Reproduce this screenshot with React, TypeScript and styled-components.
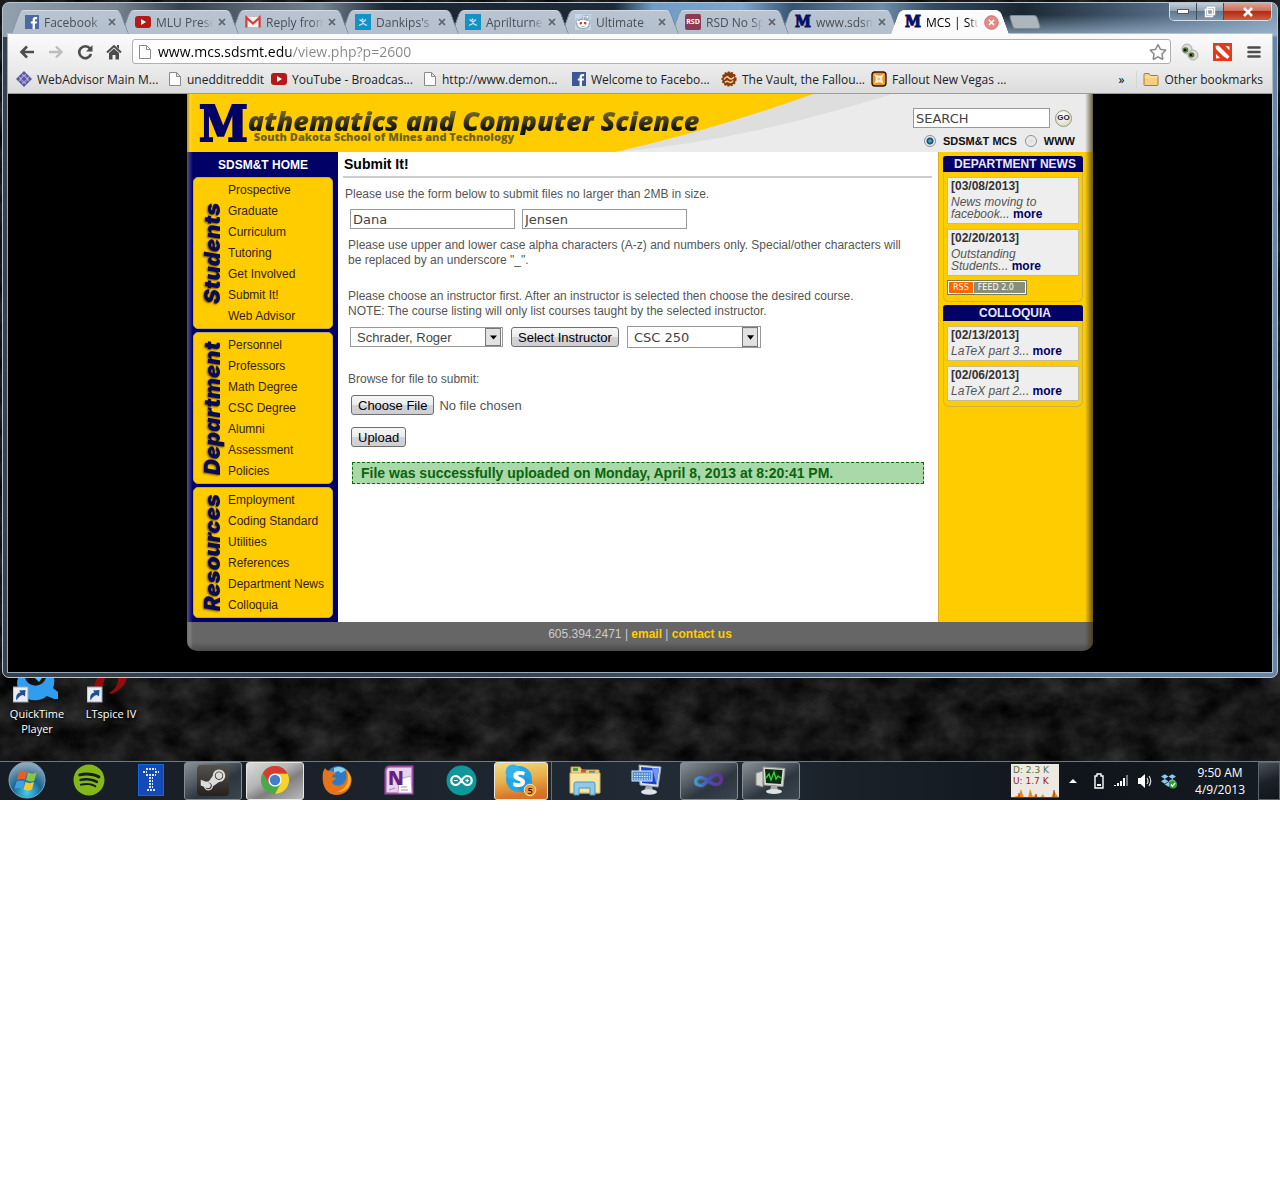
import React from "react";
import styled, { createGlobalStyle, css } from "styled-components";
import { FaDropbox, FaSpotify, FaSteamSymbol, FaRedditAlien, FaRegStar } from "react-icons/fa";

const UI_FONT = '"Open Sans", "Noto Sans", sans-serif';
const PAGE_FONT = '"Liberation Sans", Arial, sans-serif';
const FIELD_FONT = '"DejaVu Sans", Verdana, sans-serif';
const NAVY = "#000066";
const GOLD = "#ffcc00";

const GlobalStyle = createGlobalStyle`
  *, *::before, *::after { box-sizing: border-box; }
  body { margin: 0; background: #fff; font-family: ${UI_FONT}; }
  button, input, select { margin: 0; font-family: inherit; }
  ul { list-style: none; margin: 0; padding: 0; }
  h1, h2, h3, p { margin: 0; }
  svg { display: block; flex: none; }
`;

/* ---------- desktop ---------- */

const Desktop = styled.div`
  position: relative;
  display: flex;
  flex-direction: column;
  padding-top: 2px;
  overflow: hidden;
  background: #0c0c0c;
`;

const Wallpaper = styled.svg`
  position: absolute;
  inset: 0;
  width: 100%;
  height: 100%;
`;

const DesktopArea = styled.div`
  position: relative;
  display: flex;
  min-height: 83px;
`;

const Shortcut = styled.a`
  display: flex;
  flex-direction: column;
  align-items: center;
  width: 74px;
  color: #fff;
  font-size: 11px;
  line-height: 15px;
  text-align: center;
  text-decoration: none;
  text-shadow: 1px 1px 2px #000;
  svg { margin-bottom: 2px; }
`;

/* ---------- browser window ---------- */

const Window = styled.div`
  position: relative;
  margin: 0 2px;
  padding: 0 5px 5px;
  border: 1px solid #b9c6d3;
  border-radius: 7px;
  background:
    linear-gradient(180deg, rgba(160, 185, 210, 0) 12px, rgba(160, 185, 210, 0.75) 32px, rgba(160, 185, 210, 0.1) 33px) right top / 22% 34px no-repeat,
    linear-gradient(90deg, #93a0ad 0, #75818e 9%, #34404e 14%, #5a6773 20%, #74818e 25%, #1b2633 30%, #1d2936 48%, #6f9cc6 51%, #7ba6cd 58%, #35526e 62%, #6d8ba8 69%, #344a60 73%, #1a2733 80%, #43596e 88%, #7f9ab5 100%) 0 0 / 100% 34px no-repeat,
    linear-gradient(90deg, #36414c 0, #36414c 40%, #5a748f 78%, #6886a6 100%);
`;

const TitleBar = styled.div`
  display: flex;
  align-items: flex-end;
  min-height: 31px;
  padding-left: 3px;
`;

const TabList = styled.div`
  display: flex;
  flex: 0 1 auto;
  min-width: 0;
`;

const Tab = styled.button<{ $active?: boolean; $order: number }>`
  position: relative;
  z-index: ${(p) => (p.$active ? 20 : 10 - p.$order)};
  display: flex;
  flex: 0 1 118px;
  align-items: center;
  gap: 5px;
  min-width: 0;
  width: 118px;
  height: 24px;
  margin-right: -8px;
  padding: 0 ${(p) => (p.$active ? 10 : 13)}px 0 14px;
  border: 0;
  background: none;
  color: ${(p) => (p.$active ? "#000" : "#4a4f57")};
  font-size: 12px;
  text-align: left;

  &::before,
  &::after {
    content: "";
    position: absolute;
    z-index: -1;
    top: 0;
    bottom: 0;
    width: 50%;
    border-top: 1px solid ${(p) => (p.$active ? "#fff" : "#d3dbe4")};
    background: ${(p) => (p.$active ? "#fbfbfb" : "linear-gradient(#bac4d1, #b3bfcd)")};
  }
  &::before {
    left: 0;
    border-left: 1px solid ${(p) => (p.$active ? "#fff" : "#8492a3")};
    border-top-left-radius: 5px;
    transform: skewX(-20deg);
    transform-origin: bottom left;
  }
  &::after {
    right: 0;
    border-right: 1px solid ${(p) => (p.$active ? "#fff" : "#75849a")};
    border-top-right-radius: 5px;
    transform: skewX(20deg);
    transform-origin: bottom right;
  }
`;

const TabLabel = styled.span`
  flex: 1;
  min-width: 0;
  overflow: hidden;
  white-space: nowrap;
  mask-image: linear-gradient(90deg, #000 80%, transparent);
`;

const NewTab = styled.button`
  width: 28px;
  height: 14px;
  margin: 0 0 5px 10px;
  border: 1px solid #7e8a96;
  border-radius: 3px;
  background: #aeb6bd;
  transform: skewX(18deg);
`;

const WindowControls = styled.div`
  display: flex;
  align-self: flex-start;
  margin-left: auto;
  border: 1px solid #d5dfe9;
  border-top: 0;
  border-radius: 0 0 5px 5px;
  overflow: hidden;
`;

const ControlButton = styled.button<{ $close?: boolean }>`
  display: grid;
  place-items: center;
  width: ${(p) => (p.$close ? 47 : 27)}px;
  height: 17px;
  padding: 0;
  border: 0;
  border-right: ${(p) => (p.$close ? "0" : "1px solid #3d4f60")};
  background: ${(p) =>
    p.$close
      ? "linear-gradient(#e0a392 0, #cf6e58 45%, #b52b16 50%, #cd5f3f 100%)"
      : "linear-gradient(#c3ced9 0, #93a5b6 45%, #61788e 50%, #7f97ad 100%)"};
`;

const Client = styled.div`
  box-shadow: 0 0 0 1px rgba(190, 206, 222, 0.75);
`;

const Toolbar = styled.div`
  display: flex;
  align-items: center;
  padding: 5px 2px 4px 4px;
  background: linear-gradient(#fbfbfb, #ebebeb);
`;

const ToolButton = styled.button<{ $wide?: boolean }>`
  display: grid;
  place-items: center;
  width: ${(p) => (p.$wide ? 32 : 29)}px;
  height: 24px;
  padding: 0;
  border: 0;
  background: none;
`;

const Omnibox = styled.label`
  display: flex;
  flex: 1;
  align-items: center;
  gap: 6px;
  height: 25px;
  margin: 0 3px 0 4px;
  padding: 0 3px 0 5px;
  border: 1px solid #b0b0b0;
  border-radius: 3px;
  background: #fff;
`;

const UrlInput = styled.input`
  flex: 1;
  min-width: 0;
  padding: 0;
  border: 0;
  outline: 0;
  background: linear-gradient(90deg, #000 133px, #868686 133px);
  background-clip: text;
  -webkit-background-clip: text;
  color: transparent;
  font-size: 14px;
  line-height: 20px;
`;

const BookmarkBar = styled.nav`
  display: flex;
  align-items: center;
  min-height: 26px;
  padding: 0 9px 3px 8px;
  border-bottom: 1px solid #9c9c9c;
  background: linear-gradient(#ebebeb, #dcdcdc);
  font-size: 12px;
`;

const Bookmark = styled.a<{ $width?: number }>`
  display: flex;
  flex: 0 ${(p) => (p.$width ? 1 : 0)} ${(p) => (p.$width ? `${p.$width}px` : "auto")};
  align-items: center;
  gap: 5px;
  min-width: 0;
  color: #222;
  text-decoration: none;
  white-space: nowrap;
`;

const Overflow = styled.button`
  margin: 0 6px 0 auto;
  padding: 0 12px 0 0;
  border: 0;
  border-right: 1px solid #cfd6dd;
  background: none;
  font-size: 12px;
`;

const Viewport = styled.div`
  padding-bottom: 21px;
  background: #000;
`;

/* ---------- department site ---------- */

const Site = styled.div`
  position: relative;
  max-width: 906px;
  margin: 0 auto;
  overflow: hidden;
  border-radius: 0 0 10px 10px;
  color: #555;
  font-family: ${PAGE_FONT};
  font-size: 12px;
  line-height: 15px;

  &::before,
  &::after {
    content: "";
    position: absolute;
    z-index: 2;
    top: 0;
    bottom: 0;
    pointer-events: none;
  }
  &::before {
    left: 0;
    width: 6px;
    background: linear-gradient(90deg, rgba(120, 120, 120, 0.7), rgba(255, 255, 255, 0.15) 50%, transparent);
  }
  &::after {
    right: 0;
    width: 8px;
    background: linear-gradient(90deg, transparent, rgba(60, 50, 0, 0.75));
  }
`;

const SiteHeader = styled.header`
  position: relative;
  display: flex;
  align-items: flex-start;
  justify-content: space-between;
  height: 58px;
  padding: 0 18px 0 12px;
  background: #ebebeb;
`;

const Swoosh = styled.svg`
  position: absolute;
  left: 0;
  top: 0;
`;

const Brand = styled.div`
  position: relative;
  display: flex;
`;

const BlockM = styled.span`
  color: ${NAVY};
  font-family: "DejaVu Serif Condensed", "DejaVu Serif", serif;
  font-size: 49px;
  font-weight: 700;
  line-height: 60px;
  -webkit-text-stroke: 2px ${NAVY};
`;

const BrandText = styled.div`
  padding-top: 13px;
  font-family: ${UI_FONT};
  font-weight: 800;
  white-space: nowrap;
`;

const BrandTitle = styled.h1`
  background: linear-gradient(180deg, #6b6128 25%, #16170f 75%);
  background-clip: text;
  -webkit-background-clip: text;
  color: transparent;
  font-size: 27px;
  font-style: italic;
  font-weight: 800;
  line-height: 28px;
`;

const BrandSub = styled.p`
  margin-top: -4px;
  padding-left: 6px;
  color: #6f6420;
  font-size: 11px;
  line-height: 12px;
`;

const SearchForm = styled.form`
  position: relative;
  display: flex;
  flex-direction: column;
  align-items: flex-end;
  gap: 6px;
  padding-top: 14px;
`;

const SearchRow = styled.div`
  display: flex;
  align-items: center;
  gap: 5px;
  padding-right: 3px;
`;

const TextInput = styled.input<{ $width: number }>`
  width: ${(p) => p.$width}px;
  height: 20px;
  padding: 0 2px;
  border: 1px solid #999;
  background: #fff;
  color: #444;
  font-family: ${FIELD_FONT};
  font-size: 13px;
`;

const GoButton = styled.button`
  width: 17px;
  height: 17px;
  padding: 0;
  border: 1px solid #96967c;
  border-radius: 50%;
  background: radial-gradient(circle at 40% 30%, #fff, #d3d3b8);
  color: #223;
  font-size: 8px;
  font-weight: 700;
  line-height: 14px;
`;

const ScopeRow = styled.div`
  display: flex;
  align-items: center;
  color: #111;
  font-size: 11px;
  font-weight: 700;
  line-height: 14px;
`;

const ScopeLabel = styled.label`
  display: flex;
  align-items: center;
  gap: 7px;
  margin-left: 8px;
`;

const Radio = styled.input`
  appearance: none;
  width: 12px;
  height: 12px;
  border: 1px solid #8a8f94;
  border-radius: 50%;
  background: radial-gradient(circle, #ddd, #f6f6f6);
  &:checked {
    background: radial-gradient(circle, #5fc0e8 0, #12466b 3px, #e8eef2 4px);
  }
`;

const Columns = styled.div`
  display: grid;
  grid-template-columns: 151px 1fr 155px;
`;

const Sidebar = styled.nav`
  display: flex;
  flex-direction: column;
  gap: 3px;
  padding: 1px 5px 4px 6px;
  background: ${NAVY};
`;

const HomeLink = styled.a`
  margin-bottom: -3px;
  color: #fff;
  font-weight: 700;
  line-height: 24px;
  text-align: center;
  text-decoration: none;
`;

const MenuGroup = styled.section`
  display: flex;
  padding: 2px 1px 1px 8px;
  border: 1px solid #b9ab66;
  border-radius: 5px;
  background: ${GOLD};
`;

const MenuTitle = styled.h2`
  width: 20px;
  color: #0b0b55;
  font-family: Inter, ${UI_FONT};
  font-size: 22px;
  font-style: italic;
  font-weight: 900;
  line-height: 20px;
  text-align: center;
  text-shadow: -1px -1px 2px rgba(60, 40, 0, 0.7);
  writing-mode: vertical-rl;
  transform: rotate(180deg);
`;

const MenuList = styled.ul`
  padding-left: 6px;
  line-height: 21px;
  white-space: nowrap;
  a { color: #33220a; text-decoration: none; }
`;

const Main = styled.main`
  padding: 0 6px 0 5px;
  background: #fff;
`;

const PageTitle = styled.h2`
  padding: 1px 0 0 1px;
  border-bottom: 2px solid #ccc;
  color: #000;
  font-size: 14px;
  line-height: 23px;
`;

const Intro = styled.p`
  padding: 9px 2px 7px;
`;

const FormBody = styled.form`
  padding: 0 5px;
`;

const Note = styled.p<{ $top: number }>`
  margin-top: ${(p) => p.$top}px;
  padding-right: 12px;
`;

const FieldRow = styled.div<{ $top?: number; $gap?: number; $inset?: number }>`
  display: flex;
  align-items: center;
  gap: ${(p) => p.$gap ?? 8}px;
  margin-top: ${(p) => p.$top ?? 0}px;
  padding-left: ${(p) => p.$inset ?? 2}px;
`;

const SelectBox = styled.div<{ $width: number; $tall?: boolean }>`
  position: relative;
  width: ${(p) => p.$width}px;
  select {
    display: block;
    width: 100%;
    height: ${(p) => (p.$tall ? 22 : 20)}px;
    padding: 0 20px 0 6px;
    border: 1px solid #999;
    border-radius: 0;
    appearance: none;
    background: #fff;
    color: #444;
    font-family: ${(p) => (p.$tall ? FIELD_FONT : PAGE_FONT)};
    font-size: 13px;
  }
  svg {
    position: absolute;
    top: 1px;
    right: ${(p) => (p.$tall ? 1 : 0)}px;
    bottom: 1px;
    height: calc(100% - 2px);
    pointer-events: none;
  }
`;

const pushButton = css`
  height: 20px;
  padding: 0 6px;
  border: 1px solid #6f6f6f;
  border-radius: 3px;
  background: linear-gradient(#f6f6f6 0, #ececee 48%, #d3d2d7 52%, #cfcfd2 100%);
  color: #000;
  font-family: ${PAGE_FONT};
  font-size: 13px;
`;

const PushButton = styled.button`
  ${pushButton}
`;

const FileInput = styled.input`
  height: 20px;
  color: #555;
  font-family: ${PAGE_FONT};
  font-size: 13px;
  line-height: 20px;
  &::file-selector-button {
    ${pushButton}
    margin: 0 5px 0 0;
  }
`;

const Success = styled.p`
  margin: 15px 3px 0 4px;
  padding: 0 8px;
  border: 1px dashed #0b6b0b;
  background: #a9d8a9;
  color: #0b650b;
  font-size: 14px;
  font-weight: 700;
  line-height: 20px;
`;

const NewsColumn = styled.aside`
  padding: 4px 10px 0 4px;
  border-left: 1px solid #d8b020;
  background: ${GOLD};
`;

const NewsBox = styled.section`
  margin-bottom: 3px;
  border: 1px solid #cdb24a;
  border-top: 0;
  border-radius: 3px 3px 6px 6px;
`;

const NewsHeading = styled.h3`
  margin: 0 -1px 5px;
  padding-left: 4px;
  border-radius: 3px 3px 0 0;
  background: ${NAVY};
  color: #e9e9f4;
  font-size: 12px;
  line-height: 16px;
  text-align: center;
`;

const NewsCard = styled.article`
  margin: 0 3px 5px;
  padding: 0 3px 3px;
  border: 1px solid #c4bd94;
  background: #eee;
  color: #555;
  font-style: italic;
  line-height: 12px;
  white-space: pre-line;
  time {
    display: block;
    margin-bottom: 2px;
    color: #333;
    font-style: normal;
    font-weight: 700;
    line-height: 16px;
  }
  a {
    color: ${NAVY};
    font-style: normal;
    font-weight: 700;
    text-decoration: none;
  }
`;

const RssBadge = styled.a`
  display: flex;
  width: 80px;
  margin: -1px 3px 6px;
  padding: 1px;
  border: 1px solid #77775a;
  background: #fff;
  color: #fff;
  font-family: ${FIELD_FONT};
  font-size: 8px;
  line-height: 11px;
  text-decoration: none;
  span { padding: 0 4px; background: #ff6600; margin-right: 1px; }
  strong { flex: 1; padding: 0 4px; background: #898e79; font-weight: 400; white-space: nowrap; }
`;

const SiteFooter = styled.footer`
  padding: 5px 0 9px;
  background: linear-gradient(#666 70%, #4a4a4a);
  color: #ccc;
  text-align: center;
  a { color: ${GOLD}; font-weight: 700; text-decoration: none; }
`;

/* ---------- taskbar ---------- */

const Taskbar = styled.footer`
  position: relative;
  display: flex;
  align-items: center;
  gap: 4px;
  border-top: 1px solid #6f7880;
  background: linear-gradient(90deg, #161c24, #1b222b 30%, #222c36 55%, #1a2129 66%, #10151b 85%, #141b22);
`;

const StartButton = styled.button`
  width: 56px;
  height: 38px;
  padding: 0 0 0 7px;
  border: 0;
  background: none;
`;

type AppState = "idle" | "open" | "active" | "alert";

const surfaces: Record<AppState, string> = {
  idle: "none",
  open: "linear-gradient(150deg, #8a9096 0, #555d65 35%, #2d363f 60%, #3b454e)",
  active: "linear-gradient(150deg, #dcdcdc 0, #b4b4b4 40%, #7f7f7f 60%, #bababa)",
  alert: "linear-gradient(170deg, #f0dc84 0, #e8b04a 45%, #d8782a 80%, #d36c20)",
};

const AppButton = styled.button<{ $state: AppState }>`
  display: grid;
  place-items: center;
  width: 58px;
  height: 38px;
  padding: 0 0 2px;
  border: 1px solid ${(p) => (p.$state === "idle" ? "transparent" : p.$state === "open" ? "#858d94" : "#e8e8e0")};
  border-radius: 3px;
  background: ${(p) => surfaces[p.$state]};
`;

const AppSlot = styled.div`
  width: 58px;
  padding-right: 4px;
  border-right: 1px solid #66707a;
  button { width: 54px; }
`;

const Tray = styled.div`
  display: flex;
  align-items: center;
  align-self: stretch;
  gap: 8px;
  margin-left: auto;
  color: #fff;
`;

const NetMeter = styled.div`
  position: relative;
  width: 48px;
  height: 34px;
  padding: 1px 2px;
  background: #ece9e2;
  color: #5c7040;
  font-family: ${FIELD_FONT};
  font-size: 9px;
  line-height: 11px;
  white-space: nowrap;
  p + p { color: #9c1c1c; }
  svg { position: absolute; left: 0; bottom: 0; }
`;

const Clock = styled.time`
  padding: 0 5px 0 10px;
  font-size: 12px;
  line-height: 17px;
  text-align: center;
`;

const ShowDesktop = styled.button`
  width: 22px;
  align-self: stretch;
  border: 1px solid #5c646c;
  background: linear-gradient(160deg, #4a525a, #1b2128 50%, #10151a);
`;

/* ---------- small drawings ---------- */

const FacebookMark = ({ muted = false }) => (
  <svg width="14" height="14" viewBox="0 0 14 14">
    <rect width="14" height="14" fill={muted ? "#4c69a4" : "#3b5998"} />
    <path d="M7.6 14V8.6H5.8V6.5h1.8V5c0-1.9 1-2.9 2.9-2.9h1.6v2.1h-1.2c-.8 0-1 .3-1 1v1.3h2.2l-.3 2.1H9.9V14z" fill="#fff" />
  </svg>
);

const YouTubeMark = () => (
  <svg width="16" height="14" viewBox="0 0 16 14">
    <rect y="1" width="16" height="12" rx="3" fill="#b31b1b" />
    <path d="M6 4l5 3-5 3z" fill="#fff" />
  </svg>
);

const GmailMark = () => (
  <svg width="16" height="14" viewBox="0 0 16 14">
    <rect x="1" y="1.5" width="14" height="11" fill="#f3f3f3" stroke="#c9a5a5" strokeWidth=".6" />
    <path d="M1.4 12.5V2.5L8 8.6l6.6-6.1v10" fill="none" stroke="#d23f3a" strokeWidth="2.2" />
  </svg>
);

const SwimMark = () => (
  <svg width="16" height="16" viewBox="0 0 16 16">
    <rect width="16" height="16" fill="#1592c4" />
    <path d="M4.500 5.500L8 8l3-2.500M8 8v1.500L4 11.500M8 9.500l4 2" fill="none" stroke="#d6effa" strokeWidth="1.1" />
    <circle cx="7.500" cy="5.500" r="1" fill="#d6effa" />
  </svg>
);

const RedditMark = styled.span`
  position: relative;
  flex: none;
  display: grid;
  place-items: center;
  width: 16px;
  height: 16px;
  background: #c4d9ea;
  color: #fff;
  svg { filter: drop-shadow(0 0 1px #333); }
  &::after {
    content: "";
    position: absolute;
    left: 5px;
    top: 8px;
    width: 2px;
    height: 2px;
    background: #d8402a;
    box-shadow: 4px 0 0 #d8402a;
  }
`;

const RsdMark = styled.span`
  flex: none;
  width: 16px;
  height: 16px;
  border-radius: 2px;
  background: #8c3b55;
  color: #fff;
  font-size: 7px;
  font-weight: 700;
  line-height: 16px;
  text-align: center;
`;

const MiniM = styled.span`
  flex: none;
  width: 16px;
  color: #0a1066;
  font-family: "DejaVu Serif Condensed", "DejaVu Serif", serif;
  font-size: 16px;
  font-weight: 700;
  line-height: 16px;
  -webkit-text-stroke: 1px #0a1066;
`;

const PageMark = () => (
  <svg width="14" height="16" viewBox="0 0 14 16">
    <path d="M1.5 1.5h7l4 4v9h-11z M8.5 1.5v4h4" fill="#fcfcfc" stroke="#8b8b8b" />
  </svg>
);

const CloseMark = () => (
  <svg width="8" height="8" viewBox="0 0 8 8">
    <path d="M1 1l6 6M7 1L1 7" stroke="#5c6168" strokeWidth="1.7" />
  </svg>
);

const ActiveCloseMark = () => (
  <svg width="15" height="15" viewBox="0 0 15 15">
    <circle cx="7.5" cy="7.5" r="6.8" fill="#e48d88" stroke="#cf6f6b" />
    <path d="M5 5l5 5M10 5l-5 5" stroke="#fff" strokeWidth="1.6" />
  </svg>
);

const AdvisorMark = () => (
  <svg width="16" height="16" viewBox="0 0 16 16">
    <path d="M8 0l3 3 1 1 4 4-4 4-1 1-3 3-3-3-1-1-4-4 4-4 1-1z" fill="#5a58a6" />
    <path d="M8 3.5L12.5 8 8 12.5 3.5 8zM5.5 2.5l8 8M2.5 5.5l8 8M10.5 2.5l-8 8M13.5 5.5l-8 8" fill="none" stroke="#b9b8de" strokeWidth=".8" />
  </svg>
);

const VaultMark = () => (
  <svg width="16" height="16" viewBox="0 0 16 16">
    <circle cx="8" cy="8" r="6.8" fill="#8a3c0c" stroke="#8a3c0c" strokeWidth="1.600" strokeDasharray="2 1.4" />
    <path d="M3 8.500c2-3.500 3.500-3 5-1.500s3 1.500 5-1M4 11.500c1.500-2 2.500-1.500 4-.5s3 .5 4-1.500" fill="none" stroke="#f6d3a4" strokeWidth="1.500" />
  </svg>
);

const VegasMark = () => (
  <svg width="16" height="16" viewBox="0 0 16 16">
    <rect x="1" y="1" width="14" height="14" rx="3" fill="#e8952e" stroke="#2b1a08" strokeWidth="1.4" />
    <path d="M3 3q5 3.500 10 0-3.500 5 0 10-5-3.500-10 0 3.500-5 0-10z" fill="#fff3d6" />
    <circle cx="8" cy="8" r="1.600" fill="#f3bd6e" />
  </svg>
);

const FolderMark = () => (
  <svg width="16" height="14" viewBox="0 0 16 14">
    <path d="M1 12.500V2.500q0-1 1-1h4l1.500 2H14q1 0 1 1v8q0 1-1 1H2q-1 0-1-1z" fill="#f3cf82" stroke="#a87c35" />
    <path d="M1.500 5h13" stroke="#fbe7b8" />
  </svg>
);

const ShortcutArrow = ({ y }: { y: number }) => (
  <g transform={`translate(0 ${y})`}>
    <rect width="15" height="15" fill="#e9eef4" stroke="#9aa4b0" />
    <path d="M3.500 13.500C2.500 9 4 6 7.500 5.500L6 3.500l6.500-.5-.5 6.500-2-1.500c-3 .5-4.500 2-6.500 5.500z" fill="#1f4f98" />
  </g>
);

const ChromeMark = () => (
  <svg width="30" height="30" viewBox="0 0 30 30">
    <circle cx="15" cy="15" r="14" fill="#4aa84a" />
    <path d="M15 8.500h12.500A14 14 0 0 1 15 29l6-11z" fill="#f7d32b" />
    <path d="M15 8.500H27.400A14 14 0 0 0 3 7.800L9 18z" fill="#d93a30" />
    <circle cx="15" cy="15" r="6.600" fill="#fff" />
    <circle cx="15" cy="15" r="5.200" fill="#3f7fd0" />
  </svg>
);

const FirefoxMark = () => (
  <svg width="32" height="32" viewBox="0 0 32 32">
    <circle cx="17" cy="14" r="12" fill="#2d79c4" />
    <path d="M13 4c4-2 9-1 12 2l-5 3-3-2-4 2z" fill="#8fd0f0" />
    <path d="M2 8l2-4c1 2 3 3 5 3 3 0 5 1 6 3-2 0-4 1-4 3l4 1c0 2-3 2-4 4 1 4 8 5 12 1 3-4 3-9 1-14 5 3 8 9 6 15-2 7-8 11-14 11C7 31 0 24 2 8z" fill="#e5731c" />
    <path d="M25 6c5 4 6 11 3 16-3 4-8 7-13 6 7-1 12-7 12-13 0-3 0-6-2-9z" fill="#f8b32c" />
  </svg>
);

const OneNoteMark = () => (
  <svg width="30" height="30" viewBox="0 0 30 30">
    <path d="M1.500 6q0-4.500 4.500-4.500h22.500v27h-27z" fill="#e9d3ec" stroke="#9b4da3" strokeWidth="2" />
    <path d="M15 14l12-3 1 17H14z" fill="#fff" stroke="#c39ac8" />
    <text x="4" y="20" fontFamily="Open Sans" fontWeight="800" fontSize="19" fill="#6b1f7c">N</text>
    <path d="M5 25l6-2M17 22h6M17 25h7" stroke="#b284b8" />
  </svg>
);

const ArduinoMark = () => (
  <svg width="31" height="31" viewBox="0 0 31 31">
    <circle cx="15.500" cy="15.500" r="15" fill="#0f989c" />
    <path d="M15.500 15.500c-2-3-3.500-4.500-5.700-4.500a4.500 4.500 0 0 0 0 9c2.200 0 3.700-1.500 5.700-4.500s3.500-4.500 5.700-4.500a4.500 4.500 0 0 1 0 9c-2.200 0-3.700-1.500-5.700-4.500z" fill="none" stroke="#fff" strokeWidth="2.200" />
    <path d="M8 15.500h3.600M19.400 15.500H23M21.200 13.700v3.600" stroke="#fff" strokeWidth="1.200" />
  </svg>
);

const SkypeMark = () => (
  <svg width="34" height="34" viewBox="0 0 34 34">
    <circle cx="15" cy="16" r="13" fill="#22a7e6" />
    <circle cx="9" cy="9" r="7.500" fill="#35b2ec" />
    <circle cx="21" cy="22" r="7.500" fill="#1d9be0" />
    <text x="15" y="24" textAnchor="middle" fontFamily="Open Sans" fontWeight="800" fontSize="23" fill="#fff">S</text>
    <circle cx="26" cy="27" r="5.800" fill="#f3982b" stroke="#fde2b0" />
    <text x="26" y="30.500" textAnchor="middle" fontFamily="Open Sans" fontWeight="600" fontSize="9" fill="#222">5</text>
  </svg>
);

const ExplorerMark = () => (
  <svg width="34" height="32" viewBox="0 0 34 32">
    <path d="M3 29V3h9l2 3h17v23z" fill="#ecd184" stroke="#c49f45" />
    <path d="M5 4h5v3H5z" fill="#43a047" />
    <path d="M13 6h5v3h-5z" fill="#d35435" />
    <path d="M21 7h6v3h-6z" fill="#3b8fd2" />
    <path d="M2 9h30v20H2z" fill="#f7e5a5" stroke="#d3b159" />
    <path d="M6 31V20q0-2 2-2h17q2 0 2 2v11h-5v-7H11v7z" fill="#8fcbe8" stroke="#4d95bd" />
  </svg>
);

const RemoteMark = () => (
  <svg width="34" height="32" viewBox="0 0 34 32">
    <path d="M9 1l22 2-3 20-18-2z" fill="#dfe3e8" stroke="#9aa" />
    <path d="M11 3l18 1.500-2.500 16L12 19z" fill="#1b3fd0" />
    <path d="M22 4l7 .5-2.500 16z" fill="#6f95f0" />
    <rect x="2" y="7" width="20" height="10" fill="#4f8fd8" stroke="#dbe9f8" />
    <path d="M4 10h16M4 12.500h16M4 15h16" stroke="#e7f2ff" strokeDasharray="1.500 1" />
    <path d="M16 22l6 .5 1 4H14z" fill="#aab" />
    <ellipse cx="19" cy="28" rx="8" ry="2.800" fill="#dfe3e8" />
  </svg>
);

const VisualStudioMark = () => (
  <svg width="32" height="20" viewBox="0 0 32 20">
    <defs>
      <linearGradient id="vs" x1="0" x2="1">
        <stop offset="0" stopColor="#3d9bd0" />
        <stop offset=".5" stopColor="#4750b4" />
        <stop offset="1" stopColor="#6b2f9c" />
      </linearGradient>
    </defs>
    <path d="M8 15.500c-7 0-7-8 0-8 5 0 10 7 15 7 7 0 7-10 0-10-5 0-10 11-15 11z" fill="none" stroke="url(#vs)" strokeWidth="3.600" />
  </svg>
);

const MonitorMark = () => (
  <svg width="32" height="30" viewBox="0 0 32 30">
    <path d="M1 8l7-2v16l-7-2z" fill="#d4d7cf" stroke="#888" />
    <path d="M8 2l22 1.500-2 18L9 20z" fill="#d9dcd6" stroke="#999" />
    <path d="M10 4l17.500 1-1.500 14-15-1z" fill="#0b2b0f" />
    <path d="M11 13l3-4 2 6 3-8 2 7 2-3 3 2" fill="none" stroke="#2fd23a" strokeWidth="1.400" />
    <path d="M16 21h6l1 4h-8z" fill="#aaa" />
    <ellipse cx="19" cy="26.500" rx="8" ry="2.600" fill="#dfe3e0" />
  </svg>
);

const TerminalMark = () => (
  <svg width="26" height="32" viewBox="0 0 26 32">
    <rect x=".5" y=".5" width="25" height="31" fill="#1549b8" stroke="#0d6ae6" />
    <path d="M8 5h10M5 8h4M17 8h4M8 11h10M11 14h4M11 17h4M11 20h4M11 23h4M9 26h8" stroke="#d9ecff" strokeWidth="2" strokeDasharray="2 1" />
  </svg>
);

const SteamTile = styled.span`
  display: grid;
  place-items: center;
  width: 32px;
  height: 31px;
  border-radius: 4px;
  background: linear-gradient(#55524e, #24211f);
  color: #dcdcdc;
`;

const StartMark = () => (
  <svg width="40" height="38" viewBox="0 0 40 38">
    <defs>
      <radialGradient id="orb" cx=".5" cy=".85" r=".8">
        <stop offset="0" stopColor="#3fd0f2" />
        <stop offset=".5" stopColor="#1b6794" />
        <stop offset="1" stopColor="#8fa9ba" />
      </radialGradient>
    </defs>
    <circle cx="20" cy="18" r="18" fill="url(#orb)" stroke="#7ea6bd" />
    <g transform="translate(0 -1)">
      <path d="M12 11c3-2 5-1.500 8 0l-2 8c-3-1.500-5-1.500-8 0z" fill="#ee5b27" />
      <path d="M21 11.500c3 1.500 5 1.500 8.500 0l-2 8c-3 1.500-5.500 1-8.500-.5z" fill="#8cc63e" />
      <path d="M9.500 20.500c3-1.500 5-1.500 8 0l-2 7.500c-3-1.500-5-1.500-8 0z" fill="#3ea0e4" />
      <path d="M18.500 21c3 1.500 5 1.500 8.500 0l-2 7.500c-3 1.500-5.500 1.500-8.500 0z" fill="#fbc52d" />
    </g>
  </svg>
);

const Arrow = () => (
  <svg width="19" height="18" viewBox="0 0 19 18" preserveAspectRatio="none">
    <rect x="1.500" y=".5" width="15" height="17" fill="#e2e2e2" stroke="#777" />
    <path d="M6 7.500h7l-3.500 4z" fill="#000" />
  </svg>
);

/* ---------- data ---------- */

const tabs = [
  { label: "Facebook", icon: <FacebookMark muted /> },
  { label: "MLU Presents", icon: <YouTubeMark /> },
  { label: "Reply from", icon: <GmailMark /> },
  { label: "Dankips's Profile", icon: <SwimMark /> },
  { label: "Aprilturner", icon: <SwimMark /> },
  { label: "Ultimate", icon: <RedditMark><FaRedditAlien size={14} /></RedditMark> },
  { label: "RSD No Space", icon: <RsdMark>RSD</RsdMark> },
  { label: "www.sdsmt.edu", icon: <MiniM>M</MiniM> },
  { label: "MCS | Student", icon: <MiniM>M</MiniM>, active: true },
];

const bookmarks = [
  { label: "WebAdvisor Main M...", icon: <AdvisorMark />, width: 152 },
  { label: "unedditreddit", icon: <PageMark />, width: 103 },
  { label: "YouTube - Broadcas...", icon: <YouTubeMark />, width: 152 },
  { label: "http://www.demon...", icon: <PageMark />, width: 149 },
  { label: "Welcome to Facebo...", icon: <FacebookMark />, width: 149 },
  { label: "The Vault, the Fallou...", icon: <VaultMark />, width: 150 },
  { label: "Fallout New Vegas ...", icon: <VegasMark />, width: 150 },
];

const menus = [
  { title: "Students", links: ["Prospective", "Graduate", "Curriculum", "Tutoring", "Get Involved", "Submit It!", "Web Advisor"] },
  { title: "Department", links: ["Personnel", "Professors", "Math Degree", "CSC Degree", "Alumni", "Assessment", "Policies"] },
  { title: "Resources", links: ["Employment", "Coding Standard", "Utilities", "References", "Department News", "Colloquia"] },
];

const news = [
  { date: "[03/08/2013]", text: "News moving to\nfacebook... " },
  { date: "[02/20/2013]", text: "Outstanding\nStudents... " },
];

const colloquia = [
  { date: "[02/13/2013]", text: "LaTeX part 3... " },
  { date: "[02/06/2013]", text: "LaTeX part 2... " },
];

const apps: { name: string; state: AppState; icon: React.ReactNode }[] = [
  { name: "Spotify", state: "idle", icon: <FaSpotify size={32} color="#84b817" /> },
  { name: "Terminal", state: "idle", icon: <TerminalMark /> },
  { name: "Steam", state: "open", icon: <SteamTile><FaSteamSymbol size={28} /></SteamTile> },
  { name: "Chrome", state: "active", icon: <ChromeMark /> },
  { name: "Firefox", state: "idle", icon: <FirefoxMark /> },
  { name: "OneNote", state: "idle", icon: <OneNoteMark /> },
  { name: "Arduino", state: "idle", icon: <ArduinoMark /> },
  { name: "Skype", state: "alert", icon: <SkypeMark /> },
  { name: "Explorer", state: "idle", icon: <ExplorerMark /> },
  { name: "Remote Desktop", state: "idle", icon: <RemoteMark /> },
  { name: "Visual Studio", state: "open", icon: <VisualStudioMark /> },
  { name: "Monitor", state: "open", icon: <MonitorMark /> },
];

/* ---------- sections ---------- */

const BrowserChrome = () => (
  <>
    <Toolbar>
      <ToolButton aria-label="Back">
        <svg width="16" height="14" viewBox="0 0 16 14"><path d="M15 7H3M8 1.500L2.500 7 8 12.500" fill="none" stroke="#4d4d4d" strokeWidth="2.600" /></svg>
      </ToolButton>
      <ToolButton aria-label="Forward">
        <svg width="16" height="14" viewBox="0 0 16 14"><path d="M1 7h12M8 1.500L13.500 7 8 12.500" fill="none" stroke="#bdbdbd" strokeWidth="2.400" /></svg>
      </ToolButton>
      <ToolButton aria-label="Reload">
        <svg width="16" height="16" viewBox="0 0 16 16"><path d="M13 4.500A6 6 0 1 0 14 10" fill="none" stroke="#4d4d4d" strokeWidth="2.600" /><path d="M15.500 1v6.500H9z" fill="#4d4d4d" /></svg>
      </ToolButton>
      <ToolButton aria-label="Home">
        <svg width="16" height="16" viewBox="0 0 16 16"><path d="M1 8.500L8 2l7 6.500" fill="none" stroke="#4d4d4d" strokeWidth="2" /><path d="M3 9l5-4.500L13 9v6.500H9.500V11h-3v4.500H3zM11 1h2v4l-2-2z" fill="#4d4d4d" /></svg>
      </ToolButton>
      <Omnibox>
        <PageMark />
        <UrlInput aria-label="Address" defaultValue="www.mcs.sdsmt.edu/view.php?p=2600" />
        <FaRegStar size={18} color="#8b8b8b" />
      </Omnibox>
      <ToolButton $wide aria-label="Eyes">
        <svg width="18" height="18" viewBox="0 0 18 18">
          <circle cx="6" cy="6" r="5" fill="#d8dcd2" stroke="#a9afa4" /><circle cx="4.500" cy="7" r="2.800" fill="#56713f" /><circle cx="4" cy="7" r="1.200" fill="#111" />
          <circle cx="12" cy="12" r="5" fill="#d8dcd2" stroke="#a9afa4" /><circle cx="10.500" cy="12" r="2.800" fill="#56713f" /><circle cx="10" cy="12" r="1.200" fill="#111" />
        </svg>
      </ToolButton>
      <ToolButton $wide aria-label="Dota">
        <svg width="19" height="18" viewBox="0 0 19 18"><path d="M0 0h19v18H0z" fill="#e2391f" /><path d="M2.500 3l3-.5 11 11-2 2.500L10 13 3 6z" fill="#fff" /><path d="M12.500 3l4 .5v4z" fill="#fff" /><path d="M3 11l4 4-4 .5z" fill="#fff" /></svg>
      </ToolButton>
      <ToolButton $wide aria-label="Menu">
        <svg width="14" height="14" viewBox="0 0 14 14"><path d="M1.500 2.500h11M1.500 7h11M1.500 11.500h11" stroke="#4d4d4d" strokeWidth="2.600" strokeLinecap="round" /></svg>
      </ToolButton>
    </Toolbar>
    <BookmarkBar>
      {bookmarks.map((b) => (
        <Bookmark key={b.label} href="#" $width={b.width}>{b.icon}{b.label}</Bookmark>
      ))}
      <Overflow aria-label="More bookmarks">»</Overflow>
      <Bookmark href="#"><FolderMark />Other bookmarks</Bookmark>
    </BookmarkBar>
  </>
);

const NewsItems = ({ items }: { items: { date: string; text: string }[] }) => (
  <>
    {items.map((n) => (
      <NewsCard key={n.date}><time>{n.date}</time>{n.text}<a href="#">more</a></NewsCard>
    ))}
  </>
);

const DepartmentSite = () => (
  <Site>
    <SiteHeader>
      <Swoosh width="750" height="58" viewBox="0 0 750 58" aria-hidden="true">
        <path d="M0 0H705Q560 46 430 58H0z" fill="#dedede" />
        <path d="M0 0H626Q520 38 428 58H0z" fill={GOLD} />
      </Swoosh>
      <Brand>
        <BlockM>M</BlockM>
        <BrandText>
          <BrandTitle>athematics and Computer Science</BrandTitle>
          <BrandSub>South Dakota School of Mines and Technology</BrandSub>
        </BrandText>
      </Brand>
      <SearchForm onSubmit={(e) => e.preventDefault()}>
        <SearchRow>
          <TextInput $width={137} aria-label="Search" defaultValue="SEARCH" />
          <GoButton>GO</GoButton>
        </SearchRow>
        <ScopeRow>
          <ScopeLabel><Radio type="radio" name="scope" defaultChecked />SDSM&amp;T MCS</ScopeLabel>
          <ScopeLabel><Radio type="radio" name="scope" />WWW</ScopeLabel>
        </ScopeRow>
      </SearchForm>
    </SiteHeader>
    <Columns>
      <Sidebar>
        <HomeLink href="#">SDSM&amp;T HOME</HomeLink>
        {menus.map((m) => (
          <MenuGroup key={m.title}>
            <MenuTitle>{m.title}</MenuTitle>
            <MenuList>{m.links.map((l) => <li key={l}><a href="#">{l}</a></li>)}</MenuList>
          </MenuGroup>
        ))}
      </Sidebar>
      <Main>
        <PageTitle>Submit It!</PageTitle>
        <Intro>Please use the form below to submit files no larger than 2MB in size.</Intro>
        <FormBody onSubmit={(e) => e.preventDefault()}>
          <FieldRow $gap={7}>
            <TextInput $width={165} aria-label="First name" defaultValue="Dana" />
            <TextInput $width={165} aria-label="Last name" defaultValue="Jensen" />
          </FieldRow>
          <Note $top={9}>
            Please use upper and lower case alpha characters (A-z) and numbers only. Special/other characters will be replaced by an underscore "_".
          </Note>
          <Note $top={21}>
            Please choose an instructor first. After an instructor is selected then choose the desired course.
            <br />
            NOTE: The course listing will only list courses taught by the selected instructor.
          </Note>
          <FieldRow $top={7}>
            <SelectBox $width={153}><select aria-label="Instructor"><option>Schrader, Roger</option></select><Arrow /></SelectBox>
            <PushButton type="button">Select Instructor</PushButton>
            <SelectBox $width={134} $tall><select aria-label="Course"><option>CSC 250</option></select><Arrow /></SelectBox>
          </FieldRow>
          <Note $top={24}><label htmlFor="upload-file">Browse for file to submit:</label></Note>
          <FieldRow $top={8} $inset={3}><FileInput id="upload-file" type="file" /></FieldRow>
          <FieldRow $top={12} $inset={3}><PushButton>Upload</PushButton></FieldRow>
          <Success>File was successfully uploaded on Monday, April 8, 2013 at 8:20:41 PM.</Success>
        </FormBody>
      </Main>
      <NewsColumn>
        <NewsBox>
          <NewsHeading>DEPARTMENT NEWS</NewsHeading>
          <NewsItems items={news} />
          <RssBadge href="#"><span>RSS</span><strong>FEED 2.0</strong></RssBadge>
        </NewsBox>
        <NewsBox>
          <NewsHeading>COLLOQUIA</NewsHeading>
          <NewsItems items={colloquia} />
        </NewsBox>
      </NewsColumn>
    </Columns>
    <SiteFooter>605.394.2471 | <a href="#">email</a> | <a href="#">contact us</a></SiteFooter>
  </Site>
);

const SystemTray = () => (
  <Tray>
    <NetMeter>
      <p>D: 2.3 K</p>
      <p>U: 1.7 K</p>
      <svg width="48" height="10" viewBox="0 0 48 10"><path d="M0 10l3-1 5-2 2-6 3 9zM17 10l2-9 3 8 3-3 2 4zM29 10l3-4 2 4zM40 10l3-7 2 3 3 4z" fill="#e58a1e" /><path d="M0 9.500h48M8 10V5M25 10V6M43 9V2" stroke="#8c2f12" /></svg>
    </NetMeter>
    <svg width="18" height="8" viewBox="0 0 18 8"><path d="M2 6l4-4 4 4z" fill="#fff" /></svg>
    <svg width="12" height="16" viewBox="0 0 12 16"><path d="M2 3h2V1h4v2h2v12H2z" fill="none" stroke="#fff" strokeWidth="1.400" /><path d="M4 12h4" stroke="#fff" strokeWidth="2" /></svg>
    <svg width="16" height="14" viewBox="0 0 16 14"><path d="M2 11v1M5 9v3M8 7v5M11 4v8" stroke="#fff" strokeWidth="2" /><path d="M14 1v11" stroke="#777" strokeWidth="2" /></svg>
    <svg width="16" height="16" viewBox="0 0 16 16"><path d="M1 5h2.500L8 1v14l-4.500-4H1z" fill="#fff" /><path d="M10 5q2 3 0 6M12 3q3.500 5 0 10" fill="none" stroke="#ddd" strokeWidth="1.200" /></svg>
    <svg width="16" height="16" viewBox="0 0 16 16">
      <FaDropbox size={15} color="#8cc8f0" />
      <circle cx="12" cy="11.500" r="4" fill="#35a035" />
      <path d="M10 11.500l1.500 1.700 2.700-3.400" fill="none" stroke="#fff" strokeWidth="1.300" />
    </svg>
    <Clock>9:50 AM<br />4/9/2013</Clock>
    <ShowDesktop aria-label="Show desktop" />
  </Tray>
);

export default function App() {
  return (
    <>
      <GlobalStyle />
      <Desktop>
        <Wallpaper aria-hidden="true">
          <filter id="stone" colorInterpolationFilters="sRGB">
            <feTurbulence type="fractalNoise" baseFrequency="0.03 0.04" numOctaves="6" seed="8" />
            <feColorMatrix values="0.24 0 0 0 -0.03  0.24 0 0 0 -0.03  0.24 0 0 0 -0.03  0 0 0 0 1" />
          </filter>
          <rect width="100%" height="100%" filter="url(#stone)" />
        </Wallpaper>
        <Window>
          <TitleBar>
            <TabList role="tablist">
              {tabs.map((t, i) => (
                <Tab key={t.label} role="tab" aria-selected={!!t.active} $active={t.active} $order={i}>
                  {t.icon}
                  <TabLabel>{t.label}</TabLabel>
                  {t.active ? <ActiveCloseMark /> : <CloseMark />}
                </Tab>
              ))}
            </TabList>
            <NewTab aria-label="New tab" />
            <WindowControls>
              <ControlButton aria-label="Minimize"><svg width="12" height="5"><rect x=".5" y=".5" width="11" height="4" fill="#fff" stroke="#556" /></svg></ControlButton>
              <ControlButton aria-label="Restore"><svg width="12" height="12" viewBox="0 0 12 12"><path d="M3.500 1.500h7v7h-7z M1.500 3.500h7v7h-7z" fill="#8799aa" stroke="#fff" strokeWidth="1.400" /></svg></ControlButton>
              <ControlButton $close aria-label="Close"><svg width="12" height="10" viewBox="0 0 12 10"><path d="M2 1l8 8M10 1L2 9" stroke="#fff" strokeWidth="2.600" /></svg></ControlButton>
            </WindowControls>
          </TitleBar>
          <Client>
            <BrowserChrome />
            <Viewport><DepartmentSite /></Viewport>
          </Client>
        </Window>
        <DesktopArea>
          <Shortcut href="#">
            <svg width="48" height="26" viewBox="0 0 48 26">
              <path d="M5 0a18 17 0 0 0 29 18l7 3h4v-7l-5-4a18 17 0 0 0 1-10h-8a11 11 0 0 1-21 0z" fill="#2f9df0" />
              <path d="M22 0h7l-3 4z" fill="#58b8fa" />
              <ShortcutArrow y={9} />
            </svg>
            QuickTime Player
          </Shortcut>
          <Shortcut href="#">
            <svg width="48" height="26" viewBox="0 0 48 26">
              <path d="M10 0q-3 5-3 10l9-2 2-8zM31 0q1 9-9 15l3 1Q38 10 40 0z" fill="#8e0d0d" />
              <ShortcutArrow y={9} />
            </svg>
            LTspice IV
          </Shortcut>
        </DesktopArea>
        <Taskbar>
          <StartButton aria-label="Start"><StartMark /></StartButton>
          {apps.map((a) =>
            a.state === "alert" ? (
              <AppSlot key={a.name}><AppButton $state={a.state} aria-label={a.name}>{a.icon}</AppButton></AppSlot>
            ) : (
              <AppButton key={a.name} $state={a.state} aria-label={a.name}>{a.icon}</AppButton>
            )
          )}
          <SystemTray />
        </Taskbar>
      </Desktop>
    </>
  );
}
